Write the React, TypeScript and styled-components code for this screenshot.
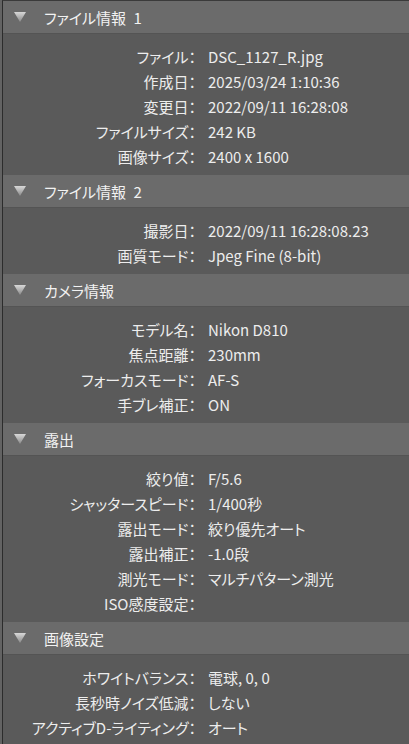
import React from "react";
import styled, { createGlobalStyle } from "styled-components";

const GlobalStyle = createGlobalStyle`
  html, body {
    margin: 0;
    padding: 0;
    background: #5a5a5a;
  }
  body {
    font-family: "Noto Sans CJK JP", "Noto Sans", sans-serif;
  }
`;

type Item = { label: string; value: string };
type Group = { title: string; items: Item[] };

const groups: Group[] = [
  {
    title: "ファイル情報\u20021",
    items: [
      { label: "ファイル：", value: "DSC_1127_R.jpg" },
      { label: "作成日：", value: "2025/03/24 1:10:36" },
      { label: "変更日：", value: "2022/09/11 16:28:08" },
      { label: "ファイルサイズ：", value: "242 KB" },
      { label: "画像サイズ：", value: "2400 x 1600" },
    ],
  },
  {
    title: "ファイル情報\u20022",
    items: [
      { label: "撮影日：", value: "2022/09/11 16:28:08.23" },
      { label: "画質モード：", value: "Jpeg Fine (8-bit)" },
    ],
  },
  {
    title: "カメラ情報",
    items: [
      { label: "モデル名：", value: "Nikon D810" },
      { label: "焦点距離：", value: "230mm" },
      { label: "フォーカスモード：", value: "AF-S" },
      { label: "手ブレ補正：", value: "ON" },
    ],
  },
  {
    title: "露出",
    items: [
      { label: "絞り値：", value: "F/5.6" },
      { label: "シャッタースピード：", value: "1/400秒" },
      { label: "露出モード：", value: "絞り優先オート" },
      { label: "露出補正：", value: "-1.0段" },
      { label: "測光モード：", value: "マルチパターン測光" },
      { label: "ISO感度設定：", value: "" },
    ],
  },
  {
    title: "画像設定",
    items: [
      { label: "ホワイトバランス：", value: "電球, 0, 0" },
      { label: "長秒時ノイズ低減：", value: "しない" },
      { label: "アクティブD-ライティング：", value: "オート" },
    ],
  },
];

const Frame = styled.div`
  min-height: 744px;
  padding-left: 2px;
  background: #636363;
`;

const Panel = styled.div`
  min-height: 743px;
  display: flex;
  flex-direction: column;
  border-left: 1px solid #2c2c2c;
  border-top: 1px solid #3a3a3a;
  background: #5a5a5a;
  color: #ededed;
  font-size: 15px;
`;

const Header = styled.div`
  height: 32px;
  display: flex;
  align-items: center;
  gap: 18px;
  padding-left: 11px;
  background: #6b6b6b;
  border-bottom: 1px solid #545454;
  color: #f2f2f2;
  font-feature-settings: "palt";
  white-space: pre;
`;

const Body = styled.div`
  display: grid;
  grid-template-columns: 193px 1fr;
  column-gap: 12px;
  padding: 10px 0 6px;
`;

const Label = styled.div`
  height: 25px;
  line-height: 25px;
  text-align: right;
  white-space: nowrap;
  font-feature-settings: "palt";
`;

const Value = styled.div`
  height: 25px;
  line-height: 25px;
  white-space: nowrap;
  font-feature-settings: "palt";
`;

const Arrow = () => (
  <svg width="12" height="10" viewBox="0 0 12 10">
    <defs>
      <linearGradient id="arrowFill" x1="0" y1="0" x2="0" y2="1">
        <stop offset="0" stopColor="#d8d8d8" />
        <stop offset="1" stopColor="#8a8a8a" />
      </linearGradient>
    </defs>
    <path d="M0 0H12L6 10Z" fill="url(#arrowFill)" />
  </svg>
);

const Section: React.FC<{ group: Group }> = ({ group }) => (
  <section>
    <Header>
      <Arrow />
      <span>{group.title}</span>
    </Header>
    <Body>
      {group.items.map((item) => (
        <React.Fragment key={item.label}>
          <Label>{item.label}</Label>
          <Value>{item.value}</Value>
        </React.Fragment>
      ))}
    </Body>
  </section>
);

export default function App() {
  return (
    <>
      <GlobalStyle />
      <Frame>
        <Panel>
          {groups.map((g) => (
            <Section key={g.title} group={g} />
          ))}
        </Panel>
      </Frame>
    </>
  );
}
